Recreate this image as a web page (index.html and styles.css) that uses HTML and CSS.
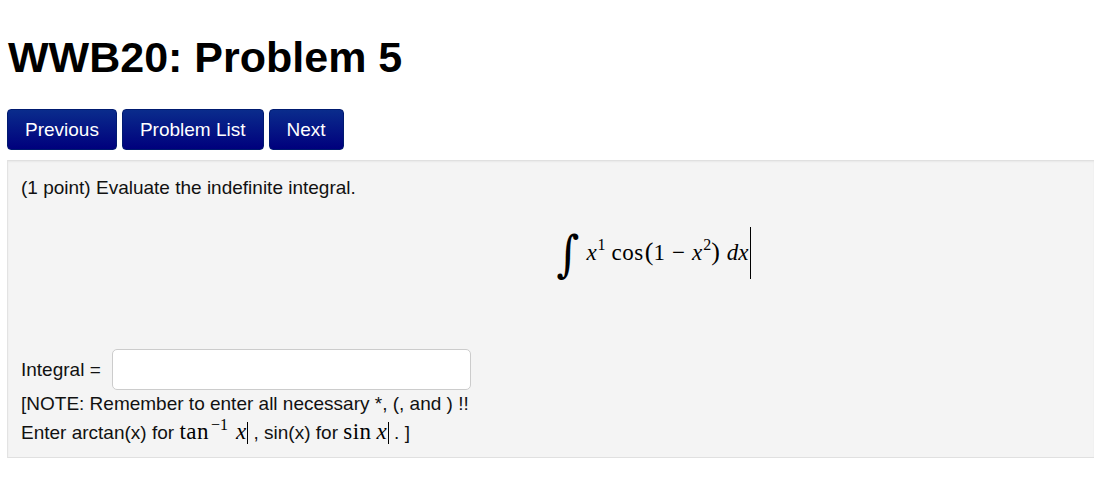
FILE: index.html
```html
<!DOCTYPE html>
<html>
<head>
<meta charset="utf-8">
<link rel="stylesheet" href="styles.css">
</head>
<body>
<div class="page">
  <h1 class="title">WWB20: Problem 5</h1>
  <div class="nav">
    <a class="btn">Previous</a>
    <a class="btn">Problem List</a>
    <a class="btn">Next</a>
  </div>
  <div class="problem">
    <p class="intro">(1 point) Evaluate the indefinite integral.</p>
    <div class="display">
      <span class="math"><span class="int">∫</span><span class="mi">x</span><sup class="sup">1</sup><span class="fn">cos</span><span class="paren">(</span>1<span class="minus">−</span><span class="mi">x</span><sup class="sup">2</sup><span class="paren">)</span><span class="d">d<span class="mi">x</span></span></span><span class="caret tall"></span>
    </div>
    <div class="answer">
      <span class="label">Integral =</span>
      <input class="field" type="text">
    </div>
    <div class="note">
      <div>[NOTE: Remember to enter all necessary *, (, and ) !!</div>
      <div>Enter arctan(x) for <span class="imath"><span class="fn">tan</span><sup class="isup">−1</sup><span class="mi">x</span></span><span class="caret"></span> , sin(x) for <span class="imath"><span class="fn">sin</span><span class="mi sp">x</span></span><span class="caret"></span> . ]</div>
    </div>
  </div>
</div>
</body>
</html>
```
FILE: styles.css
```css
* { box-sizing: border-box; }
body {
  margin: 0;
  background: #fff;
  font-family: "Liberation Sans", Arial, sans-serif;
  color: #000;
}
.page {
  padding: 0 0 0 7px;
}
.title {
  margin: 0;
  padding: 33px 0 0 1px;
  font-size: 43px;
  line-height: 48px;
  font-weight: bold;
}
.nav {
  display: flex;
  gap: 5px;
  margin-top: 28px;
}
.btn {
  display: block;
  height: 41px;
  padding: 0 17px;
  line-height: 39px;
  font-size: 19px;
  color: #fff;
  background: linear-gradient(#0a2c8c, #00007d);
  border: 1px solid #001a70;
  border-radius: 4px;
}
.problem {
  margin-top: 10px;
  height: 298px;
  background: #f4f4f4;
  border-top: 1px solid #e0e0e0;
  border-left: 1px solid #e3e3e3;
  border-bottom: 1px solid #e0e0e0;
  box-shadow: inset 0 1px 2px rgba(0,0,0,0.05);
  padding: 15px 0 0 13px;
  font-size: 19px;
  color: #111;
}
.intro {
  margin: 0;
  line-height: 24px;
}
.display {
  display: flex;
  justify-content: center;
  align-items: center;
  padding-left: 192px;
  height: 80px;
  margin-top: 13px;
}
.math {
  font-family: "Liberation Serif", "DejaVu Serif", serif;
  font-size: 23px;
  color: #000;
  white-space: nowrap;
}
.int {
  font-family: "DejaVu Serif", serif;
  font-style: italic;
  font-size: 44px;
  display: inline-block;
  transform: scaleY(1.12);
  vertical-align: -9px;
  margin-right: 7px;
}
.mi { font-style: italic; }
.sup { font-size: 16px; vertical-align: 10px; line-height: 0; margin-left: 1px; }
.fn { margin: 0 1px 0 6px; letter-spacing: 0.5px; }
.paren { font-size: 26px; }
.minus { margin: 0 7px; }
.d { margin-left: 7px; font-style: italic; }
.caret {
  display: inline-block;
  width: 1px;
  height: 22px;
  background: #000;
  vertical-align: -5px;
  margin-left: 1px;
}
.caret.tall {
  height: 52px;
  margin-left: 1px;
}
.answer {
  display: flex;
  align-items: center;
  gap: 11px;
  margin-top: 56px;
}
.field {
  width: 359px;
  height: 41px;
  border: 1px solid #ccc;
  border-radius: 5px;
  background: #fff;
  font-size: 17px;
  padding: 0 8px;
}
.note {
  line-height: 28px;
  margin-top: 0px;
}
.imath {
  font-family: "Liberation Serif", "DejaVu Serif", serif;
  font-size: 23px;
  color: #000;
}
.imath .fn { margin: 0; letter-spacing: 0.5px; }
.isup { font-size: 16px; vertical-align: 9px; line-height: 0; margin: 0 8px 0 2px; }
.sp { margin-left: 5px; }
```
